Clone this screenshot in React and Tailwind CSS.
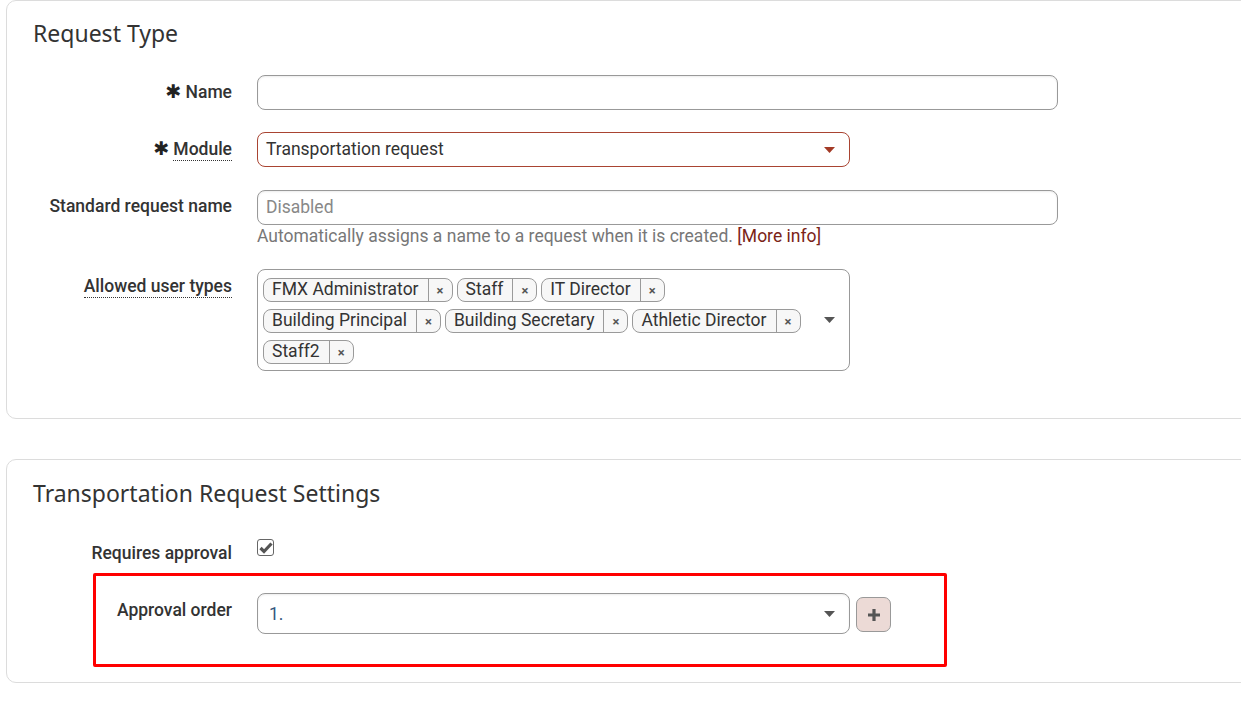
import { useState } from "react";

const userTypes = [
    ["FMX Administrator", "Staff", "IT Director"],
    ["Building Principal", "Building Secretary", "Athletic Director"],
    ["Staff2"],
];

function Caret({ color = "#555" }) {
    return (
        <svg width="11" height="6" viewBox="0 0 11 6" className="shrink-0">
            <path d="M0 0h11L5.5 6z" fill={color} />
        </svg>
    );
}

function Label({ children, required, dotted, className = "" }) {
    return (
        <div
            className={`w-[225px] shrink-0 text-right font-medium text-[17.5px] leading-[24px] text-[#333] ${className}`}
        >
            {required ? (
                <span className="mr-[4px] text-[19px] font-['DejaVu_Sans'] text-[#222]">✱</span>
            ) : null}
            <span
                className={
                    dotted ? "border-b border-dotted border-[#333] pb-[1px]" : ""
                }
            >
                {children}
            </span>
        </div>
    );
}

function Tag({ name }) {
    return (
        <div className="flex h-[24px] items-stretch rounded-[8px] border border-[#9a9a9a] bg-[#f7f7f7] mr-[4px] mb-[7px] text-[17.5px] text-[#333] leading-none">
            <span className="flex items-center pl-[8px] pr-[9px]">{name}</span>
            <span className="flex w-[24px] items-center justify-center border-l border-[#9a9a9a] text-[13px] font-bold text-[#555]">
                ×
            </span>
        </div>
    );
}

export default function App() {
    const [checked, setChecked] = useState(true);

    return (
        <div className="w-[1241px] overflow-hidden bg-white font-['Roboto',sans-serif] text-[#333]">
            <div className="ml-[6px] w-[1280px] rounded-[10px] border border-[#dcdcdc] pb-[47px]">
                <h2 className="pl-[26px] pt-[16px] font-['Noto_Sans',sans-serif] text-[23px] leading-[32px] text-[#333]">
                    Request Type
                </h2>

                <div className="mt-[26px] flex items-start">
                    <Label required className="pt-[4px]">
                        Name
                    </Label>
                    <div className="ml-[25px] h-[35px] w-[801px] rounded-[8px] border border-[#999] shadow-[inset_0_1px_2px_rgba(0,0,0,0.08)]" />
                </div>

                <div className="mt-[22px] flex items-start">
                    <Label required dotted className="pt-[4px]">
                        Module
                    </Label>
                    <div className="ml-[25px] flex h-[35px] w-[593px] items-center justify-between rounded-[8px] border border-[#a94432] pl-[8px] pr-[14px] text-[17.5px] text-[#333]">
                        <span>Transportation request</span>
                        <Caret color="#a33a26" />
                    </div>
                </div>

                <div className="mt-[23px] flex items-start">
                    <Label className="pt-[4px]">Standard request name</Label>
                    <div className="ml-[25px]">
                        <div className="flex h-[35px] w-[801px] items-center rounded-[8px] border border-[#999] pl-[8px] text-[17.5px] text-[#888] shadow-[inset_0_1px_2px_rgba(0,0,0,0.08)]">
                            Disabled
                        </div>
                        <div className="text-[17.5px] leading-[23px] text-[#777]">
                            Automatically assigns a name to a request when it is
                            created.{" "}
                            <span className="text-[#7b2417]">[More info]</span>
                        </div>
                    </div>
                </div>

                <div className="mt-[21px] flex items-start">
                    <Label dotted className="pt-[5px]">
                        Allowed user types
                    </Label>
                    <div className="ml-[25px] flex h-[102px] w-[593px] items-center rounded-[8px] border border-[#999] pl-[5px] pr-[14px]">
                        <div className="flex flex-1 flex-col self-start pt-[8px]">
                            {userTypes.map((row, idx) => (
                                <div key={idx} className="flex">
                                    {row.map((t) => (
                                        <Tag key={t} name={t} />
                                    ))}
                                </div>
                            ))}
                        </div>
                        <Caret />
                    </div>
                </div>
            </div>

            <div className="ml-[6px] mt-[40px] w-[1280px] rounded-[10px] border border-[#dcdcdc] pb-[15px]">
                <h2 className="pl-[26px] pt-[17px] font-['Noto_Sans',sans-serif] text-[23px] leading-[32px] text-[#333]">
                    Transportation Request Settings
                </h2>

                <div className="mt-[30px] flex items-start">
                    <Label className="pt-[2px]">Requires approval</Label>
                    <button
                        className="ml-[25px] flex h-[17px] w-[17px] items-center justify-center rounded-[3px] border-[1.5px] border-[#666] bg-white"
                        onClick={() => setChecked(!checked)}
                    >
                        {checked ? (
                            <svg width="14" height="12" viewBox="0 0 14 12">
                                <path
                                    d="M1.5 6l3.5 3.5L12.5 1.5"
                                    fill="none"
                                    stroke="#555"
                                    strokeWidth="3.2"
                                />
                            </svg>
                        ) : null}
                    </button>
                </div>

                <div className="ml-[86px] mt-[8px] flex w-[854px] items-start rounded-[2px] border-[3px] border-[#ff0000] pb-[30px] pt-[17px]">
                    <div className="w-[136px] shrink-0 pt-[5px] text-right text-[17.5px] leading-[24px] font-medium text-[#333]">
                        Approval order
                    </div>
                    <div className="ml-[25px] flex h-[41px] w-[593px] items-center justify-between rounded-[8px] border border-[#999] pl-[11px] pr-[14px] text-[17.5px] text-[#34577d] shadow-[inset_0_1px_2px_rgba(0,0,0,0.08)]">
                        <span className="pt-[2px]">1.</span>
                        <Caret />
                    </div>
                    <button className="ml-[6px] mt-[4px] flex h-[35px] w-[35px] items-center justify-center rounded-[7px] border border-[#999] bg-[#ecdad6]">
                        <svg width="14" height="14" viewBox="0 0 14 14">
                            <path
                                d="M7 1v12M1 7h12"
                                stroke="#555"
                                strokeWidth="3.2"
                            />
                        </svg>
                    </button>
                </div>
            </div>
            <div className="h-[28px]" />
        </div>
    );
}
